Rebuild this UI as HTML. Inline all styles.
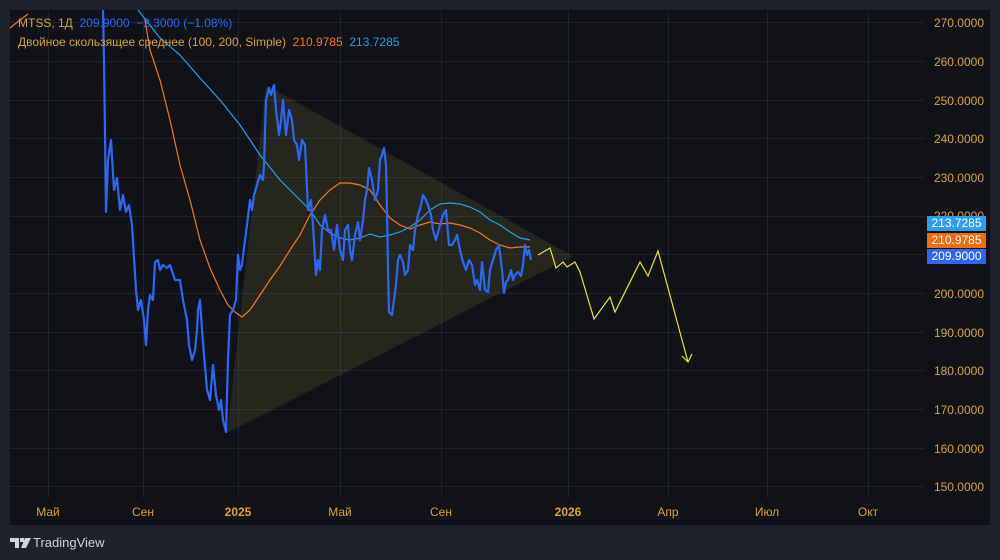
<!DOCTYPE html>
<html><head><meta charset="utf-8"><style>
html,body{margin:0;padding:0;background:#1e222d;width:1000px;height:560px;overflow:hidden;font-family:"Liberation Sans","DejaVu Sans",sans-serif}
#panel{position:absolute;left:10px;top:10px;width:980px;height:515px;background:#111318;}
.pl{position:absolute;right:16px;font-size:12px;color:#d4a43a;}
.tl{position:absolute;top:505px;font-size:12px;color:#d4a43a;transform:translateX(-50%)}
.tag{position:absolute;left:927px;width:59px;height:15px;font-size:12px;color:#fff;text-align:center;line-height:15px}
.lg{position:absolute;left:18px;font-size:12px;color:#d4a43a;white-space:nowrap}
</style></head><body>
<div id="panel"></div>
<svg width="1000" height="560" style="position:absolute;left:0;top:0">
<g stroke="#1f232b" stroke-width="1">
<line x1="10" x2="925" y1="22.5" y2="22.5"/><line x1="10" x2="925" y1="61.5" y2="61.5"/><line x1="10" x2="925" y1="100.5" y2="100.5"/><line x1="10" x2="925" y1="138.5" y2="138.5"/><line x1="10" x2="925" y1="177.5" y2="177.5"/><line x1="10" x2="925" y1="216.5" y2="216.5"/><line x1="10" x2="925" y1="254.5" y2="254.5"/><line x1="10" x2="925" y1="293.5" y2="293.5"/><line x1="10" x2="925" y1="332.5" y2="332.5"/><line x1="10" x2="925" y1="370.5" y2="370.5"/><line x1="10" x2="925" y1="409.5" y2="409.5"/><line x1="10" x2="925" y1="448.5" y2="448.5"/><line x1="10" x2="925" y1="486.5" y2="486.5"/>
<line x1="48.5" x2="48.5" y1="10" y2="498"/><line x1="143.5" x2="143.5" y1="10" y2="498"/><line x1="238.5" x2="238.5" y1="10" y2="498"/><line x1="340.5" x2="340.5" y1="10" y2="498"/><line x1="441.5" x2="441.5" y1="10" y2="498"/><line x1="568.5" x2="568.5" y1="10" y2="498"/><line x1="668.5" x2="668.5" y1="10" y2="498"/><line x1="767.5" x2="767.5" y1="10" y2="498"/><line x1="868.5" x2="868.5" y1="10" y2="498"/>
</g>
<polygon points="266,85 573,256 227,433" fill="rgba(240,230,100,0.09)"/>
<polyline fill="none" stroke="#f5781e" stroke-width="1.2" points="10,28 20,20 28,14"/>
<polyline fill="none" stroke="#f5781e" stroke-width="1.2" points="145,20 150,50 160,80 170,120 180,165 190,200 200,240 210,268 220,290 228,305 235,312 242,317 250,310 260,295 270,280 280,266 290,250 300,235 310,215 320,200 330,190 340,183 350,183 360,185 370,190 380,205 390,218 400,225 410,229 420,225 430,222 440,224 450,223 460,225 470,228 480,233 490,240 500,245 510,248 520,247 530,247"/>
<polyline fill="none" stroke="#2a9fe0" stroke-width="1.2" points="138,10 160,38 180,55 200,78 220,100 240,125 260,155 280,180 300,200 310,210 320,225 330,233 340,238 350,240 360,238 370,234 380,237 390,235 400,232 410,227 420,220 430,210 440,204 450,203 460,204 470,207 480,212 490,220 500,225 510,232 520,238 530,240"/>
<polyline fill="none" stroke="#2e66f5" stroke-width="2.2" stroke-linejoin="round" points="103,10 104,60 106,212 108,160 111,140 114,190 117,178 120,210 123,195 126,212 129,205 132,225 136,290 138,310 141,300 144,320 146,345 148,310 150,295 153,300 155,262 158,260 160,270 163,265 167,268 170,265 175,280 180,280 183,300 187,320 189,345 192,360 195,350 197,330 198,310 200,300 202,330 204,355 207,390 210,400 213,365 216,395 219,410 221,400 223,420 226,432 228,360 230,315 233,310 236,300 238,255 240,270 242,265 244,248 247,225 250,200 252,210 254,195 257,185 260,175 263,180 264,165 266,100 269,88 271,95 274,85 276,110 279,135 281,120 283,100 286,135 289,110 292,120 294,140 297,145 299,160 302,140 305,145 308,210 311,200 313,225 316,275 318,260 320,270 322,230 325,215 328,230 331,230 334,250 337,225 340,250 343,260 345,230 348,225 350,250 352,260 355,235 358,222 360,240 363,220 365,200 367,190 369,168 372,180 375,200 378,190 380,160 382,155 384,148 386,165 387,210 388,270 389,312 392,315 394,300 396,285 398,260 400,255 403,262 405,275 408,270 410,245 413,250 415,230 418,215 421,205 423,195 426,200 428,205 431,215 433,230 436,240 440,225 443,215 446,210 449,245 452,245 455,240 457,235 460,250 463,262 466,270 469,260 472,265 475,285 477,280 480,290 482,262 485,290 488,292 490,270 493,260 496,250 499,245 502,270 504,293 506,282 508,280 511,270 513,280 515,275 518,272 521,276 523,265 525,245 527,255 529,250 531,260"/>
<polyline fill="none" stroke="#f0e040" stroke-width="1.2" points="538,255 550,248 556,268 563,262 567,267 575,262 580,272 594,319 610,297 615,312 640,262 648,276 658,251 688,362"/>
<polyline fill="none" stroke="#f0e040" stroke-width="1.2" points="682,356 688,362 692,354"/>
</svg>
<div class="lg" style="top:16px">MTSS, 1Д&nbsp; <span style="color:#2e66f5">209.9000&nbsp; −2.3000 (−1.08%)</span></div>
<div class="lg" style="top:35px">Двойное скользящее среднее (100, 200, Simple)&nbsp; <span style="color:#f5781e">210.9785</span>&nbsp; <span style="color:#2a9fe0">213.7285</span></div>
<div class="pl" style="top:16px">270.0000</div><div class="pl" style="top:55px">260.0000</div><div class="pl" style="top:94px">250.0000</div><div class="pl" style="top:132px">240.0000</div><div class="pl" style="top:171px">230.0000</div><div class="pl" style="top:209px">220.0000</div><div class="pl" style="top:287px">200.0000</div><div class="pl" style="top:326px">190.0000</div><div class="pl" style="top:364px">180.0000</div><div class="pl" style="top:403px">170.0000</div><div class="pl" style="top:442px">160.0000</div><div class="pl" style="top:480px">150.0000</div>
<div class="tag" style="top:216px;background:#2a9ff0">213.7285</div>
<div class="tag" style="top:233px;background:#f56a0a">210.9785</div>
<div class="tag" style="top:249px;background:#2e66f5">209.9000</div>
<div class="tl" style="left:48px">Май</div><div class="tl" style="left:143px">Сен</div><div class="tl" style="left:238px;font-weight:bold">2025</div><div class="tl" style="left:340px">Май</div><div class="tl" style="left:441px">Сен</div><div class="tl" style="left:568px;font-weight:bold">2026</div><div class="tl" style="left:668px">Апр</div><div class="tl" style="left:767px">Июл</div><div class="tl" style="left:868px">Окт</div>
<svg width="22" height="12" style="position:absolute;left:10px;top:538px"><path d="M0 0h9v10h-4v-6h-5z M10 0h4v4h-4z M15 0h6l-5 10h-5z" fill="#d1d4dc"/></svg>
<div style="position:absolute;left:33px;top:535px;font-size:13px;color:#d1d4dc">TradingView</div>
</body></html>
